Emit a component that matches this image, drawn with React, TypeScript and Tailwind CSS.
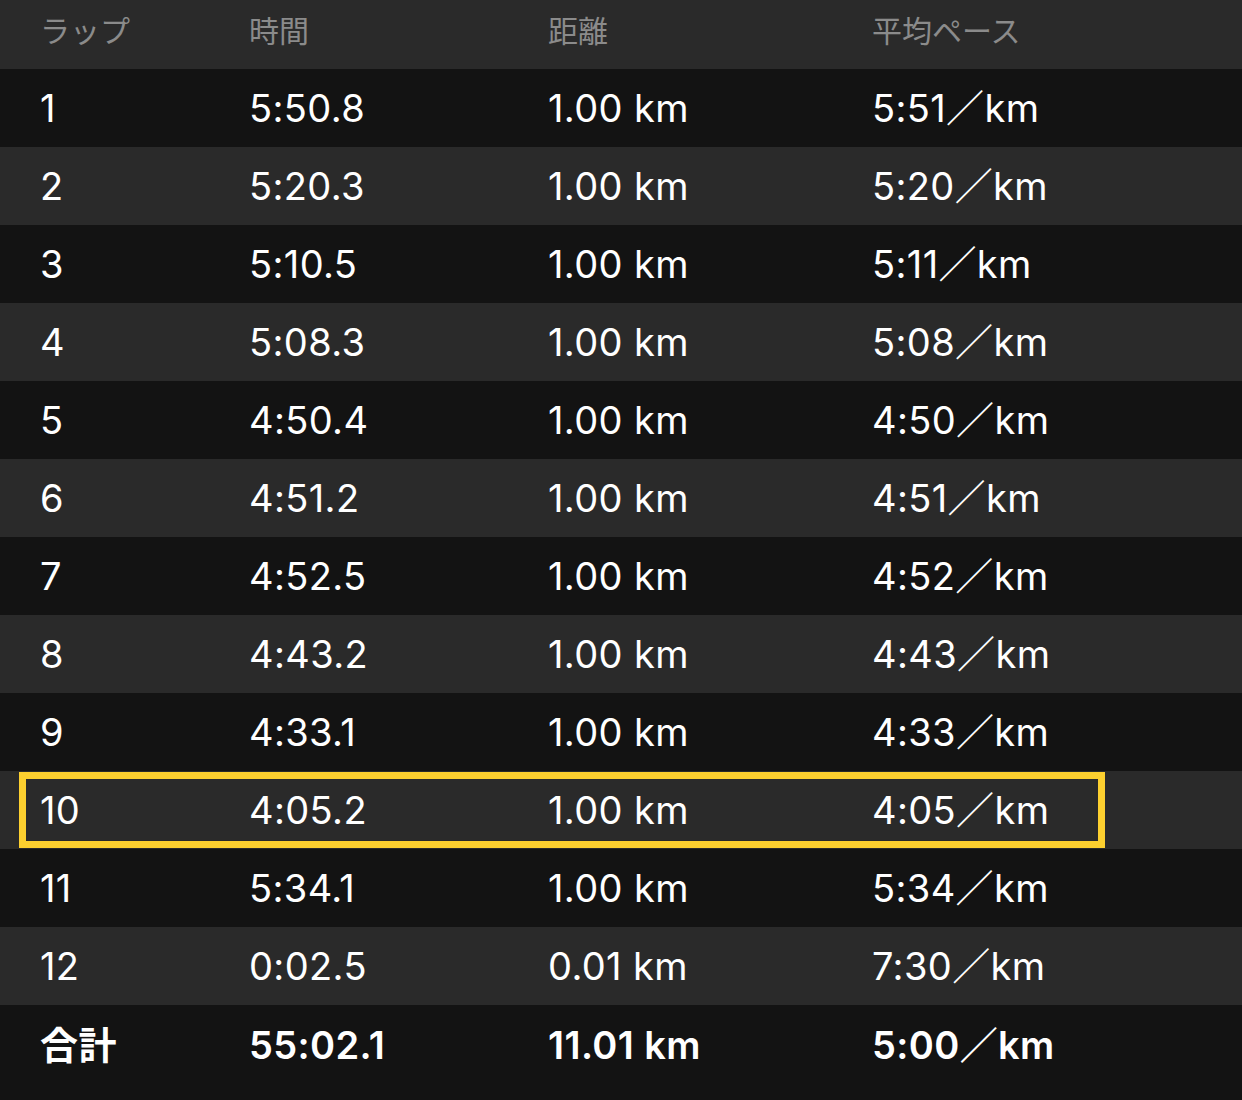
import React from 'react';

type Lap = { lap: string; time: string; dist: string; pace: string };

const laps: Lap[] = [
  { lap: '1', time: '5:50.8', dist: '1.00 km', pace: '5:51／km' },
  { lap: '2', time: '5:20.3', dist: '1.00 km', pace: '5:20／km' },
  { lap: '3', time: '5:10.5', dist: '1.00 km', pace: '5:11／km' },
  { lap: '4', time: '5:08.3', dist: '1.00 km', pace: '5:08／km' },
  { lap: '5', time: '4:50.4', dist: '1.00 km', pace: '4:50／km' },
  { lap: '6', time: '4:51.2', dist: '1.00 km', pace: '4:51／km' },
  { lap: '7', time: '4:52.5', dist: '1.00 km', pace: '4:52／km' },
  { lap: '8', time: '4:43.2', dist: '1.00 km', pace: '4:43／km' },
  { lap: '9', time: '4:33.1', dist: '1.00 km', pace: '4:33／km' },
  { lap: '10', time: '4:05.2', dist: '1.00 km', pace: '4:05／km' },
  { lap: '11', time: '5:34.1', dist: '1.00 km', pace: '5:34／km' },
  { lap: '12', time: '0:02.5', dist: '0.01 km', pace: '7:30／km' },
];

const font = { fontFamily: 'Inter, "Noto Sans CJK JP", sans-serif' };

const Cells: React.FC<{ row: Lap; offset?: boolean }> = ({ row, offset }) => (
  <>
    <div className={offset ? 'w-[223px] pl-[14px]' : 'w-[249px] pl-[40px]'}>{row.lap}</div>
    <div className="w-[299px]">{row.time}</div>
    <div className="w-[324px]">{row.dist}</div>
    <div>{row.pace}</div>
  </>
);

const App: React.FC = () => {
  return (
    <div className="w-[1242px] h-[1100px] bg-[#131313] text-white overflow-hidden" style={font}>
      <div className="flex items-center h-[69px] pb-[7px] bg-[#2a2a2a] text-[30px] text-[#8b8b8b]">
        <div className="w-[249px] pl-[40px]">ラップ</div>
        <div className="w-[299px]">時間</div>
        <div className="w-[324px]">距離</div>
        <div>平均ペース</div>
      </div>

      {laps.map((row, i) => {
        const bg = i % 2 === 0 ? 'bg-[#131313]' : 'bg-[#2a2a2a]';
        if (row.lap === '10') {
          return (
            <div key={row.lap} className={`h-[78px] flex items-center ${bg} text-[38px] tracking-[0.01em]`}>
              <div className="ml-[19px] w-[1086px] h-[76px] flex items-center border-[7px] border-[#fdd02f]">
                <Cells row={row} offset />
              </div>
            </div>
          );
        }
        return (
          <div key={row.lap} className={`h-[78px] flex items-center ${bg} text-[38px] tracking-[0.01em]`}>
            <Cells row={row} />
          </div>
        );
      })}

      <div className="flex items-center h-[80px] text-[38px] font-semibold tracking-[0.01em]">
        <div className="w-[249px] pl-[40px]">合計</div>
        <div className="w-[299px]">55:02.1</div>
        <div className="w-[324px]">11.01 km</div>
        <div>5:00／km</div>
      </div>
    </div>
  );
};

export default App;
